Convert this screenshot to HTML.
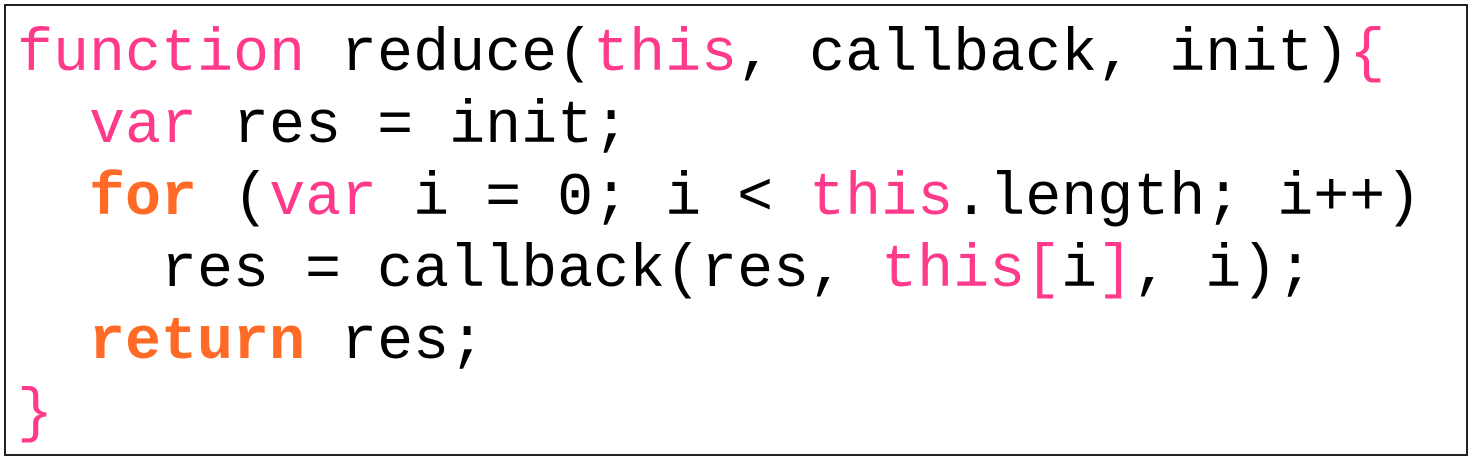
<!DOCTYPE html>
<html><head><style>
html,body{margin:0;padding:0;background:#fff;width:1472px;height:460px;overflow:hidden}
.box{position:absolute;left:4px;top:4px;width:1460px;height:448px;border:2px solid #222;background:#fff}
pre{position:absolute;left:17px;top:19px;margin:0;font-family:"Liberation Mono",monospace;font-size:60px;line-height:72px;color:#000}
.p{color:#ff3a8a}.o{color:#ff6a26;font-weight:bold}
</style></head><body>
<div class="box"></div>
<pre><span class="p">function</span> reduce(<span class="p">this</span>, callback, init)<span class="p">{</span>
  <span class="p">var</span> res = init;
  <span class="o">for</span> (<span class="p">var</span> i = 0; i &lt; <span class="p">this</span>.length; i++)
    res = callback(res, <span class="p">this[</span>i<span class="p">]</span>, i);
  <span class="o">return</span> res;
<span class="p">}</span></pre>
</body></html>
